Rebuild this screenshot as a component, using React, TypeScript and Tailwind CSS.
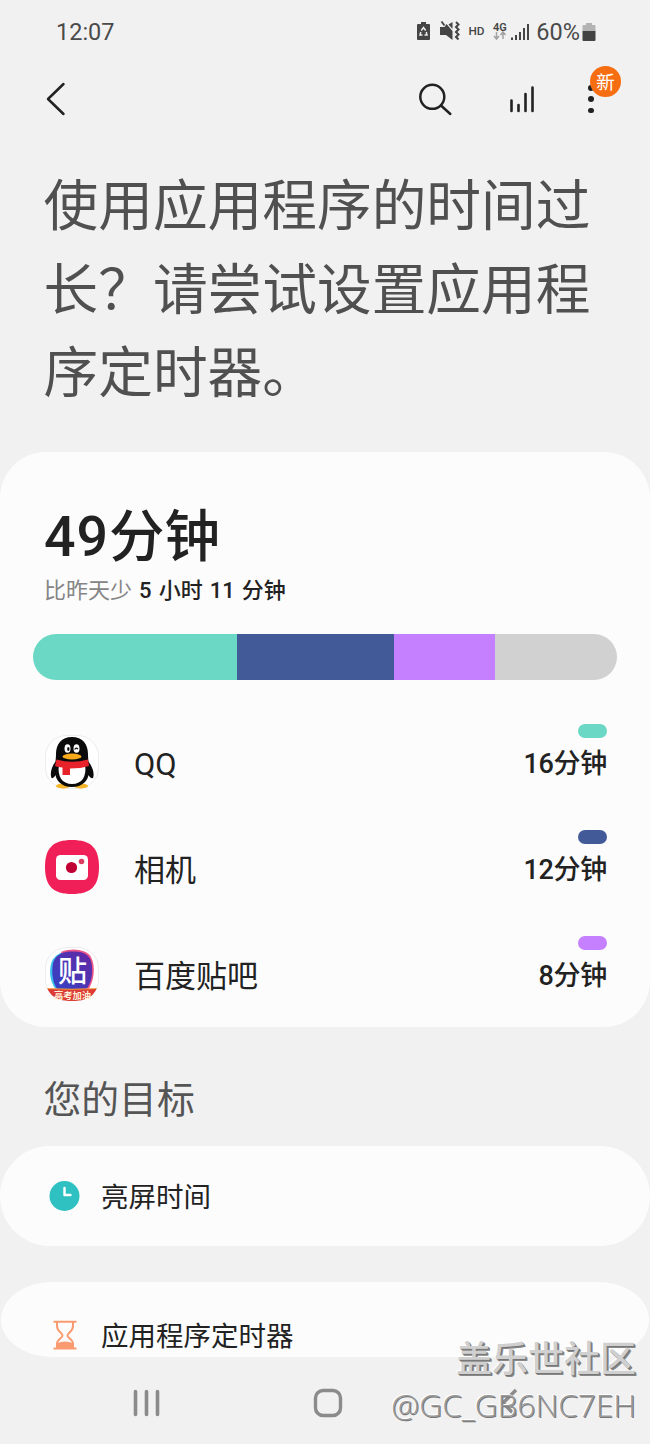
import type { ReactNode } from "react";

const segments = [
  { color: "bg-[#6ad8c4]", width: 203.5 },
  { color: "bg-[#425a98]", width: 157.5 },
  { color: "bg-[#c580ff]", width: 101 },
  { color: "bg-[#d1d1d1]", width: 122 },
];

const QQIcon = () => (
  <svg viewBox="0 0 54 54" className="mt-[2px] h-[54px] w-[54px]">
    <rect x="0.5" y="0.5" width="53" height="53" rx="21" fill="#fff" stroke="#ececec" />
    <ellipse cx="18" cy="51" rx="7" ry="2.6" fill="#f5b52a" />
    <ellipse cx="36" cy="51" rx="7" ry="2.6" fill="#f5b52a" />
    <path d="M12 25C7 30 4.500 38 6.500 43C8 44 10 41 13 37zM42 25C47 30 50 38 48 43C46 44 44 41 41 37z" fill="#0b0b0b" />
    <path d="M27 2C16.500 2 11 9 11 19C11 24 10 29 10 36C10 46 17 52 27 52S44 46 44 36C44 29 43 24 43 19C43 9 37.500 2 27 2z" fill="#0b0b0b" />
    <path d="M14 30C12 41 17 49 27 49S42 41 40 30z" fill="#fff" />
    <ellipse cx="22.500" cy="13.500" rx="3" ry="4.300" fill="#fff" />
    <ellipse cx="31.500" cy="13.500" rx="3" ry="4.300" fill="#fff" />
    <ellipse cx="23.300" cy="14" rx="1.200" ry="1.900" fill="#111" />
    <path d="M29.700 14.500q1.500-2.500 3.200-.3" stroke="#111" strokeWidth="1.300" fill="none" />
    <ellipse cx="27" cy="21.500" rx="9.500" ry="3" fill="#f7ab1b" />
    <path d="M11.500 24.500Q27 29 43 24.500L44 31Q36 33.500 25 33.500V40H17.500V32.500Q13 32 10 31z" fill="#e8222a" />
  </svg>
);

const CameraIcon = () => (
  <svg viewBox="0 0 54 54" className="h-[54px] w-[54px]">
    <path d="M27 0C46 0 54 8 54 27S46 54 27 54S0 46 0 27S8 0 27 0z" fill="#f01f57" />
    <rect x="11" y="15" width="32" height="25" rx="4.500" fill="#fff" />
    <circle cx="26.500" cy="27.500" r="5.600" fill="#c00034" />
    <circle cx="36.500" cy="21.500" r="2.800" fill="#dc3b62" />
  </svg>
);

const TiebaIcon = () => (
  <svg viewBox="0 0 54 54" className="mt-px h-[54px] w-[54px]">
    <defs>
      <clipPath id="tieba">
        <path d="M27 0C46 0 54 8 54 27S46 54 27 54S0 46 0 27S8 0 27 0z" />
      </clipPath>
      <linearGradient id="tieba-bg" x1="0" y1="1" x2="1" y2="0">
        <stop offset="0" stopColor="#3144c8" />
        <stop offset="1" stopColor="#6527a3" />
      </linearGradient>
    </defs>
    <rect x="0.500" y="0.500" width="53" height="53" rx="21" fill="#fff" stroke="#ececec" />
    <g clipPath="url(#tieba)">
      <path d="M7 14C11 6 20 3 28 5L38 44L14 46C5 38 3 24 7 14z" fill="#39bfec" />
      <path d="M16 5C28 0 42 3 46 10C51 20 49 34 43 43L30 40z" fill="#ed5688" />
      <path d="M8 16C11 6 20 4 30 4.500C41 5 46 9 47 19C48 31 45 38 39 46H15C8 38 6 27 8 16z" fill="url(#tieba-bg)" />
      <path d="M0 41.500Q27 42.500 54 41.500V54H0z" fill="#dc3c35" />
      <path d="M0 41.500Q27 43 54 41.500" stroke="#f3a13c" fill="none" />
    </g>
    <text x="27.500" y="34.500" textAnchor="middle" fontSize="29" fontWeight="500" fill="#fff">贴</text>
    <text x="27.500" y="51.500" textAnchor="middle" fontSize="9.300" fontWeight="700" fill="#fff2da">高考加油</text>
  </svg>
);

const apps = [
  { name: "QQ", time: "16分钟", color: "bg-[#6ad8c4]", icon: <QQIcon /> },
  { name: "相机", time: "12分钟", color: "bg-[#425a98]", icon: <CameraIcon /> },
  { name: "百度贴吧", time: "8分钟", color: "bg-[#c580ff]", icon: <TiebaIcon /> },
];

const StatusBar = () => (
  <div className="flex h-[62px] items-center justify-between pl-[56px] pr-[54px] pt-[4px] text-[#4a4a4a]">
    <span className="text-[23.5px]">12:07</span>
    <div className="flex items-center">
      <svg viewBox="0 0 120 24" className="h-6 w-[120px]" fill="#454545">
        <path d="M4 1h5v2h3q1 0 1 1v14q0 1-1 1H1q-1 0-1-1V4q0-1 1-1h3z" />
        <path d="M4.300 9.500L6.500 6.500L8.700 9.500M3.800 11L3 14H5.500M9.200 11L10 14H7.500" stroke="#eee" strokeWidth="1.500" fill="none" />
        <path d="M23 6h4.500l2-3 6 7v9l-6.500-5H23z" />
        <path d="M31.500 3.500l4-2.500v7z" />
        <path d="M24.500.5l3 4" stroke="#454545" strokeWidth="1.800" />
        <path d="M39 1l2.500 2.500-2.500 2.500 2.500 2.500-2.500 2.500 2.500 2.500-2.500 2.500 2.500 2.500" stroke="#454545" strokeWidth="2" fill="none" />
        <text x="51.500" y="13.800" fontSize="11.800" fontWeight="500">HD</text>
        <text x="76" y="9.500" fontSize="11" fontWeight="600">4G</text>
        <path d="M79.500 11v7M77 15l2.500 3 2.500-3M86 18v-7M83.500 14l2.500-3 2.500 3" stroke="#a2a2a2" strokeWidth="1.500" fill="none" />
        <path d="M94 16.500h2V19h-2zM98 14h2v5h-2zM102 11h2v8h-2zM106 7h2v12h-2zM110 3h2v16h-2z" />
      </svg>
      <span className="-ml-[1px] text-[23.5px]">60%</span>
      <svg viewBox="0 0 14 20" className="ml-[2px] h-5 w-[14px] -mt-[2px]">
        <path d="M4 1h6v2h2.500q1 0 1 1v5H.5V4q0-1 1-1H4z" fill="#b3b3b3" />
        <path d="M.5 9h13v9q0 1-1 1h-11q-1 0-1-1z" fill="#434343" />
      </svg>
    </div>
  </div>
);

const Toolbar = () => (
  <div className="flex h-[74px] items-center pl-[45px] pr-[50px]">
    <svg viewBox="0 0 22 36" className="h-9 w-[22px]" fill="none" stroke="#222" strokeWidth="2.5" strokeLinecap="round" strokeLinejoin="round">
      <path d="M18.500 3L3 18L18.500 33" />
    </svg>
    <svg viewBox="0 0 36 36" className="ml-[351px] h-9 w-9" fill="none" stroke="#222" strokeWidth="2.5" strokeLinecap="round">
      <circle cx="14.300" cy="15.800" r="12" />
      <path d="M23 24.500L32.300 33" />
    </svg>
    <svg viewBox="0 0 28 30" className="ml-[54px] h-[30px] w-7" stroke="#222" strokeWidth="2.6" strokeLinecap="round">
      <path d="M3.500 16.500V27M10.500 21V27M17.500 10V27M24.500 3.500V27" />
    </svg>
    <div className="relative ml-[49px] flex h-[34px] w-[12px] flex-col items-center justify-between py-[3px]">
      <span className="size-[5.5px] rounded-full bg-[#222]" />
      <span className="size-[5.5px] rounded-full bg-[#222]" />
      <span className="size-[5.5px] rounded-full bg-[#222]" />
      <span className="absolute -top-[16px] left-[5px] flex size-[31px] items-center justify-center rounded-full bg-[#f66d12] pt-[4px] text-[18.5px] leading-none text-white">
        新
      </span>
    </div>
  </div>
);

const Goal = ({ icon, label }: { icon: ReactNode; label: string }) => (
  <div className="flex items-center gap-[21px] pl-[49px] text-[27.5px] leading-[40px]">
    {icon}
    <span className="-mb-[2px] pt-[2px]">{label}</span>
  </div>
);

const ClockIcon = () => (
  <svg viewBox="0 0 31 31" className="h-[31px] w-[31px]">
    <circle cx="15.500" cy="15" r="15" fill="#2fc1c1" />
    <path d="M15.500 7V14H21.500" stroke="#fff" strokeWidth="2.400" strokeLinecap="round" strokeLinejoin="round" fill="none" />
  </svg>
);

const HourglassIcon = () => (
  <svg viewBox="0 0 31 31" className="h-[31px] w-[31px]" fill="none" stroke="#f99a70" strokeWidth="2">
    <path d="M4.500 1.800H27.500M4.500 28.500H27.500" />
    <path d="M8 2V6C8 12 13.500 12.500 13.500 15.500S8 19 8 24V28M24 2V6C24 12 18.500 12.500 18.500 15.500S24 19 24 24V28" />
    <path d="M8 28V23Q16 20 24 23V28z" fill="#f99a70" stroke="none" />
  </svg>
);

const NavBar = () => (
  <div className="flex h-[87px] items-center pl-[133px] pt-[5px] text-[#8b8b8b]">
    <svg viewBox="0 0 28 28" className="size-7" stroke="currentColor" strokeWidth="3.6" strokeLinecap="round">
      <path d="M2.500 2.500V25.500M13.500 2.500V25.500M24.500 2.500V25.500" />
    </svg>
    <svg viewBox="0 0 30 30" className="ml-[152px] size-[30px]" fill="none" stroke="currentColor" strokeWidth="3.400">
      <rect x="2.500" y="2.500" width="25" height="25" rx="7.500" />
    </svg>
    <svg viewBox="0 0 18 30" className="ml-[157px] h-[30px] w-[18px]" fill="none" stroke="currentColor" strokeWidth="3.400">
      <path d="M16 2L3 15L16 28" />
    </svg>
  </div>
);

const App = () => {
  return (
    <div className="relative h-[1444px] w-[650px] overflow-hidden bg-[#f1f1f1] font-['Roboto','Noto_Sans_CJK_SC',sans-serif] text-[#222]">
      <StatusBar />
      <Toolbar />

      <h1 className="h-[316px] whitespace-nowrap pl-[43.5px] pt-[29px] text-[54.7px] leading-[83.5px] text-[#505050]">
        使用应用程序的时间过
        <br />
        长？请尝试设置应用程
        <br />
        序定时器。
      </h1>

      <section className="h-[575px] rounded-[46px] bg-[#fcfcfc] pt-[50px]">
        <div className="pl-[44px] text-[55.5px] font-medium leading-[72px]">
          <span className="tracking-[1px]">49</span>分钟
        </div>
        <div className="pl-[44px] pt-px text-[22px] leading-[32px]">
          <span className="text-[#858585]">比昨天少</span>
          <span className="font-medium [word-spacing:1.6px]"> 5 小时 11 分钟</span>
        </div>

        <div className="ml-[33px] mt-[27px] flex h-[46px] w-[584px] overflow-hidden rounded-full">
          {segments.map((s) => (
            <div key={s.color} className={s.color} style={{ width: s.width }} />
          ))}
        </div>

        <div className="pt-[28px]">
          {apps.map((app) => (
            <div key={app.name} className="flex h-[106px] items-center pl-[45px] pr-[43px]">
              {app.icon}
              <span className="ml-[35px] pt-[8px] text-[31px]">{app.name}</span>
              <div className="ml-auto flex flex-col items-end pb-[16px]">
                <span className={`h-[14px] w-[29px] rounded-full ${app.color}`} />
                <span className="mt-[7px] -mb-px text-[27px] font-medium leading-[38px] tracking-[-0.3px]">{app.time}</span>
              </div>
            </div>
          ))}
        </div>
      </section>

      <h2 className="flex h-[119px] items-center pl-[43.5px] pt-[28px] text-[37.8px] text-[#555]">您的目标</h2>

      <section className="flex h-[100px] items-center rounded-[50px] bg-[#fcfcfc]">
        <Goal icon={<ClockIcon />} label="亮屏时间" />
      </section>

      <section className="mx-px mt-[36px] flex h-[75px] items-end rounded-[52px/38px] bg-[#fcfcfc] pb-[2px]">
        <div className="-ml-px">
          <Goal icon={<HourglassIcon />} label="应用程序定时器" />
        </div>
      </section>

      <NavBar />

      <div className="absolute right-[14px] top-[1336px] flex flex-col items-end whitespace-nowrap">
        <div className="text-[36px] font-medium leading-[48px] text-[#d0d0d0] [text-shadow:1px_1px_0_#777,2px_2px_0_#888,-1px_-1px_0_#fff]">盖乐世社区</div>
        <div className="-mt-px font-['Open_Sans',sans-serif] text-[31.6px] font-light leading-[44px] text-[#999] [text-shadow:1px_1px_0_#777,-1px_-1px_0_#fff]">
          @GC_GB6NC7EH
        </div>
      </div>
    </div>
  );
};

export default App;
